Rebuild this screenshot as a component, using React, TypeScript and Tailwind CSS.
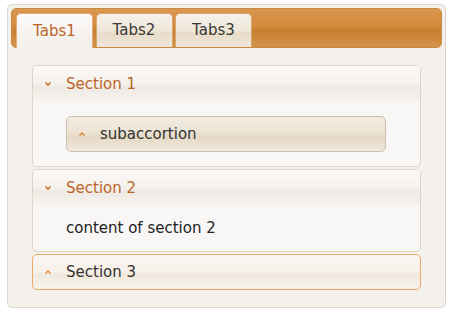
import React from "react";

const font = { fontFamily: '"DejaVu Sans", Verdana, sans-serif' };

const Chevron = ({ up, color }: { up?: boolean; color: string }) => (
  <svg width="6" height="4" viewBox="0 0 6 4" className="shrink-0">
    <path
      d={up ? "M0.5 3.5 L3 1 L5.5 3.5" : "M0.5 0.5 L3 3 L5.5 0.5"}
      fill="none"
      stroke={color}
      strokeWidth="1.4"
    />
  </svg>
);

const tabs = ["Tabs1", "Tabs2", "Tabs3"];

export default function App() {
  return (
    <div className="w-[461px] h-[314px] bg-white pt-[4px] pl-[7px]" style={font}>
      <div className="w-[439px] h-[304px] border border-[#ddd5cc] rounded-[5px] bg-[#f4f1ed] p-[3px] text-[15px]">
        {/* tab strip */}
        <div className="h-[40px] rounded-[5px] border border-[#c98a45] bg-[linear-gradient(to_bottom,#da974f,#d28a3d_48%,#c87e2e_55%,#d49249)] flex items-end pl-[4px] gap-[2.5px]">
          {tabs.map((t, i) => (
            <div
              key={t}
              className={
                i === 0
                  ? "w-[77px] h-[35px] -mb-px rounded-t-[5px] border border-b-0 border-[#e2b07a] bg-[linear-gradient(to_bottom,#fcfbfa,#f6f2ee_60%,#f4f1ed)] text-[#b9652b] flex items-center justify-center"
                  : "w-[77px] h-[34px] rounded-t-[5px] border border-b-0 border-[#d9a86e] bg-[linear-gradient(to_bottom,#f6f1ea,#efe6d8_50%,#e8dcc8_60%,#efe7dc)] text-[#383838] flex items-center justify-center"
              }
            >
              {t}
            </div>
          ))}
        </div>

        {/* accordion */}
        <div className="mt-[17px] mx-[21px] flex flex-col gap-[2px]">
          <div className="rounded-[5px] border border-[#ddd4c9] bg-[#f9f7f5] overflow-hidden">
            <div className="h-[36px] flex items-center pl-[12px] gap-[15px] text-[#b9652b] bg-[linear-gradient(to_bottom,#fbfaf8,#f5f1ec_50%,#efe9e2_58%,#f6f3ef)]">
              <Chevron color="#c4621c" />
              <span>Section 1</span>
            </div>
            <div className="h-[64px] pl-[33px] pr-[34px] pt-[14px]">
              <div className="h-[36px] rounded-[5px] border border-[#cbbfad] bg-[linear-gradient(to_bottom,#f2ece3,#ece3d4_45%,#e6d9c3_58%,#efe8dd)] flex items-center pl-[12px] gap-[15px] text-[#333]">
                <Chevron up color="#e0862c" />
                <span>subaccortion</span>
              </div>
            </div>
          </div>

          <div className="rounded-[5px] border border-[#ddd4c9] bg-[#f9f7f5] overflow-hidden">
            <div className="h-[36px] flex items-center pl-[12px] gap-[15px] text-[#b9652b] bg-[linear-gradient(to_bottom,#fbfaf8,#f5f1ec_50%,#efe9e2_58%,#f6f3ef)]">
              <Chevron color="#c4621c" />
              <span>Section 2</span>
            </div>
            <div className="h-[45px] pl-[33px] flex items-center text-[#222]">
              content of section 2
            </div>
          </div>

          <div className="h-[36px] rounded-[5px] border border-[#eba967] bg-[linear-gradient(to_bottom,#faf6f1,#f6f0e8_50%,#f1e9dd_58%,#f7f2ec)] flex items-center pl-[12px] gap-[15px] text-[#333]">
            <Chevron up color="#e0862c" />
            <span>Section 3</span>
          </div>
        </div>
      </div>
    </div>
  );
}
